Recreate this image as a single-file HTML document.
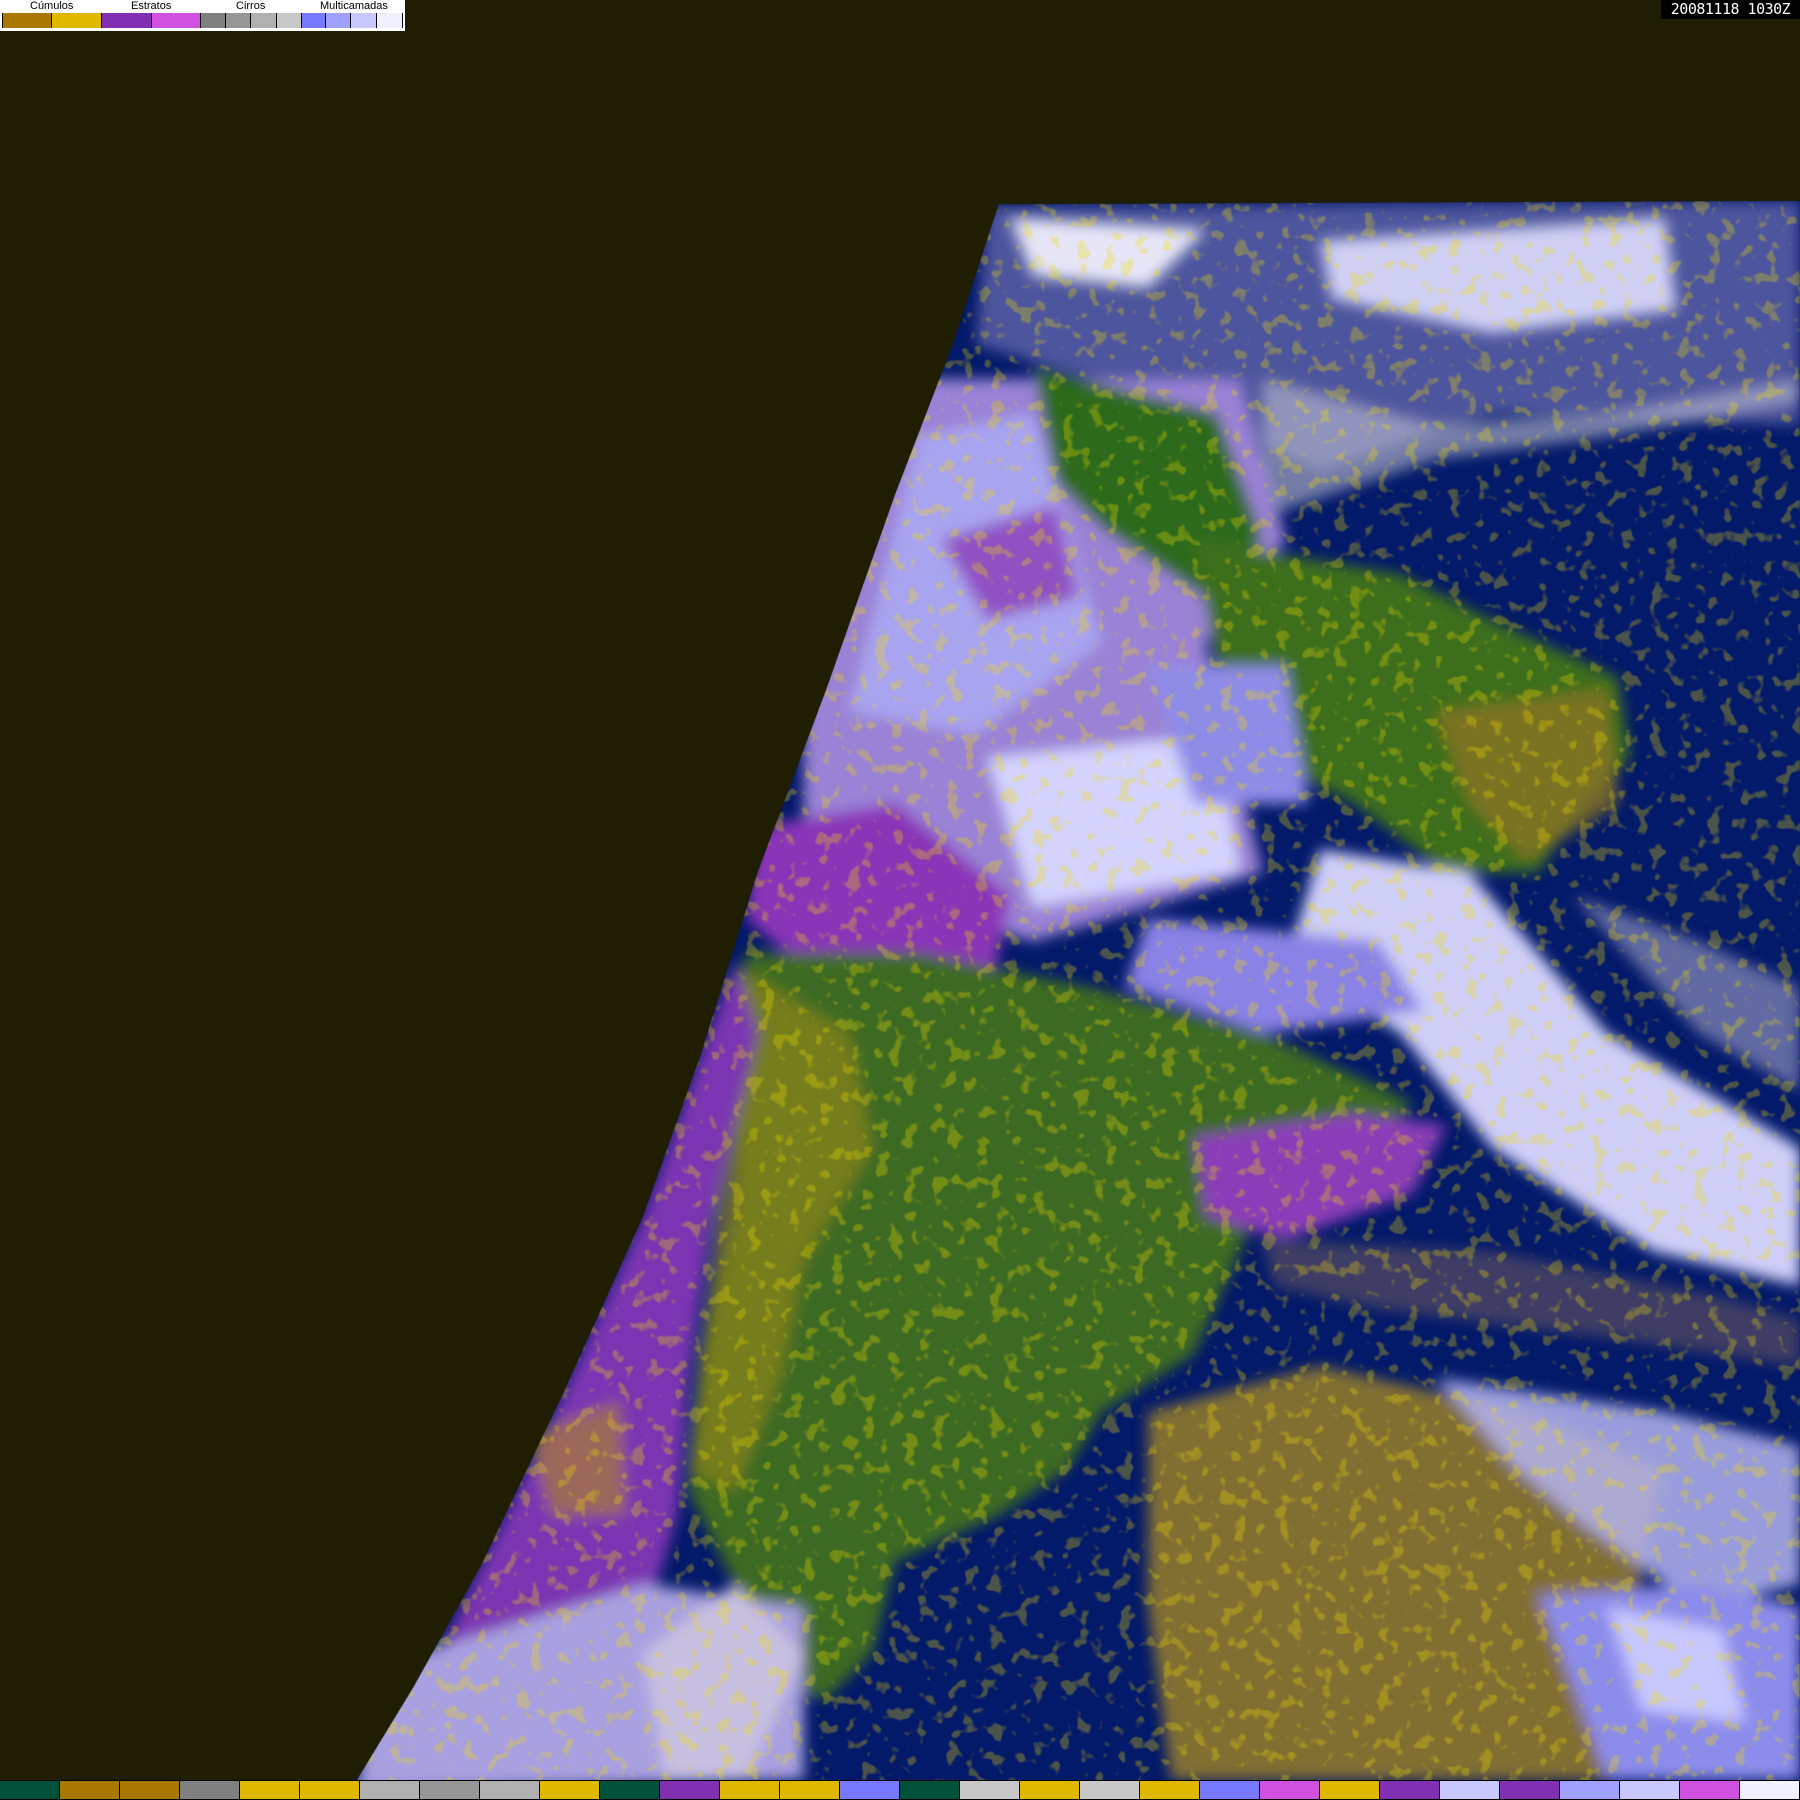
<!DOCTYPE html>
<html><head><meta charset="utf-8"><style>
html,body{margin:0;padding:0;background:#1f1d02;}
body{width:1800px;height:1800px;position:relative;overflow:hidden;font-family:"Liberation Sans",sans-serif;}
#map{position:absolute;left:0;top:0;}
#legend{position:absolute;left:0;top:0;width:405px;height:31px;background:#fff;}
#legend .lab{position:absolute;top:0;font-size:11px;color:#000;line-height:13px;}
#legend .sw{position:absolute;top:13px;height:15px;border-right:1px solid #000;}
#ts{position:absolute;right:0;top:0;width:139px;height:19px;background:#000;color:#fff;font-family:"DejaVu Sans Mono",monospace;font-size:15px;line-height:19px;text-align:center;letter-spacing:-0.5px;}
#bar{position:absolute;left:0;top:1780px;width:1800px;height:20px;background:#000;display:flex;}
#bar div{width:59px;height:18px;margin-top:1px;margin-right:1px;}
</style></head><body>
<svg id="map" width="1800" height="1800" viewBox="0 0 1568 1568">
<defs>
<clipPath id="earth"><polygon points="870,178 1568,175 1568,1552 310,1552 360,1470 420,1362 490,1215 560,1060 610,920 660,760 720,600 780,430 830,300"/></clipPath>
<filter id="b"><feGaussianBlur stdDeviation="6"/></filter>
<filter id="n" x="0" y="0" width="100%" height="100%"><feTurbulence type="fractalNoise" baseFrequency="0.08" numOctaves="2" seed="3"/><feColorMatrix type="matrix" values="0 0 0 0 0.88 0 0 0 0 0.72 0 0 0 0 0 0 0 0 9 -5.2"/></filter>
</defs>
<g clip-path="url(#earth)">
<rect x="300" y="170" width="1270" height="1390" fill="#03196a"/>
<g filter="url(#b)">
<polygon points="860,180 1568,175 1568,370 1300,360 1150,410 1080,380 950,330 850,300" fill="#8a86c8" opacity="0.55"/>
<polygon points="880,190 1050,200 1000,250 900,240" fill="#e6e6f8"/>
<polygon points="1150,210 1450,190 1460,270 1300,290 1160,260" fill="#d0d0f4"/>
<polygon points="1100,330 1250,370 1400,360 1568,330 1568,350 1400,380 1250,400 1100,450" fill="#c0c0d0" opacity="0.6"/>
<polygon points="780,330 1080,330 1120,470 1050,560 1100,760 900,820 700,760 700,600 760,450" fill="#9a82d6"/>
<polygon points="800,380 900,360 960,560 850,640 740,620" fill="#a9a4f0"/>
<polygon points="860,660 1060,640 1080,760 900,790" fill="#d4d4ff"/>
<polygon points="820,470 920,440 940,520 860,540" fill="#8a3cb8" opacity="0.8"/>
<polygon points="900,320 1060,360 1100,470 1050,520 960,460 920,420" fill="#2e6a1a"/>
<polygon points="1040,470 1220,500 1300,540 1410,590 1420,660 1380,700 1340,760 1260,760 1180,700 1100,660 1060,580" fill="#3c6e1e"/>
<polygon points="1250,620 1400,600 1410,700 1330,750 1280,700" fill="#8a7420" opacity="0.8"/>
<polygon points="1000,580 1120,580 1140,700 1040,700" fill="#8f8ce8"/>
<polygon points="660,720 780,700 880,780 860,880 720,860 650,800" fill="#8a34b8"/>
<polygon points="1150,740 1280,760 1400,900 1568,1000 1568,1120 1440,1090 1300,1000 1220,900 1120,840" fill="#cfcff8"/>
<polygon points="1000,800 1200,820 1240,880 1100,900 980,860" fill="#8a82e6"/>
<polygon points="1370,780 1480,820 1568,860 1568,950 1480,900" fill="#a0a0c8" opacity="0.6"/>
<polygon points="650,830 800,830 950,860 1100,900 1230,960 1200,1000 1110,1020 1080,1090 1040,1180 960,1230 930,1280 870,1320 780,1360 760,1440 720,1480 680,1470 640,1380 600,1300 610,1180 640,1050 640,950" fill="#3e6a20"/>
<polygon points="1040,990 1180,970 1260,980 1230,1040 1120,1080 1050,1060" fill="#8a3cb8"/>
<polygon points="640,840 740,900 760,1000 700,1100 680,1200 640,1300 600,1280 620,1100 630,950" fill="#9a8a20" opacity="0.6"/>
<polygon points="640,840 660,900 620,1060 600,1200 590,1320 560,1420 430,1500 330,1550 420,1362 490,1215 560,1060 610,920" fill="#7c35b2"/>
<polygon points="460,1250 540,1220 545,1320 480,1320" fill="#b08a20" opacity="0.6"/>
<polygon points="330,1450 560,1380 700,1400 700,1550 310,1560" fill="#a8a0e0"/>
<polygon points="560,1440 640,1380 700,1440 650,1550 580,1550" fill="#c8c0e0"/>
<polygon points="1000,1230 1150,1190 1330,1230 1450,1280 1420,1420 1400,1550 1020,1550 1000,1400" fill="#b89418" opacity="0.7"/>
<polygon points="1250,1200 1450,1230 1568,1260 1568,1380 1480,1400 1380,1330 1320,1280" fill="#b4b4f0" opacity="0.85"/>
<polygon points="1340,1390 1480,1380 1568,1400 1568,1550 1400,1550" fill="#8c8cec"/>
<polygon points="1400,1400 1500,1420 1520,1500 1430,1490" fill="#c8c8ff"/>
<polygon points="1100,1080 1300,1090 1500,1130 1568,1150 1568,1190 1400,1165 1200,1140 1110,1120" fill="#8a6a60" opacity="0.45"/>
</g>
<rect x="300" y="170" width="1270" height="1390" filter="url(#n)" opacity="0.3"/>
</g>
</svg>
<div id="legend">
<div class="lab" style="left:30px">Cúmulos</div>
<div class="lab" style="left:131px">Estratos</div>
<div class="lab" style="left:236px">Cirros</div>
<div class="lab" style="left:320px">Multicamadas</div>
<div style="position:absolute;left:2px;top:13px;width:1px;height:15px;background:#000"></div>
<div class="sw" style="left:3px;width:48px;background:#a87800"></div>
<div class="sw" style="left:52px;width:49px;background:#e0b800"></div>
<div class="sw" style="left:102px;width:49px;background:#8030b0"></div>
<div class="sw" style="left:152px;width:48px;background:#d050e0"></div>
<div class="sw" style="left:201px;width:24px;background:#808080"></div>
<div class="sw" style="left:226px;width:24px;background:#969696"></div>
<div class="sw" style="left:251px;width:25px;background:#b0b0b0"></div>
<div class="sw" style="left:277px;width:24px;background:#c8c8c8"></div>
<div class="sw" style="left:302px;width:23px;background:#7878ff"></div>
<div class="sw" style="left:326px;width:24px;background:#a0a0ff"></div>
<div class="sw" style="left:351px;width:25px;background:#c8c8ff"></div>
<div class="sw" style="left:377px;width:25px;background:#f0f0ff"></div>
</div>
<div id="ts">20081118 1030Z</div>
<div id="bar">
<div style="background:#00503a"></div><div style="background:#a87800"></div><div style="background:#a87800"></div><div style="background:#808080"></div><div style="background:#e0b800"></div><div style="background:#e0b800"></div><div style="background:#b0b0b0"></div><div style="background:#969696"></div><div style="background:#b0b0b0"></div><div style="background:#e0b800"></div><div style="background:#00503a"></div><div style="background:#8030b0"></div><div style="background:#e0b800"></div><div style="background:#e0b800"></div><div style="background:#7878ff"></div><div style="background:#00503a"></div><div style="background:#c8c8c8"></div><div style="background:#e0b800"></div><div style="background:#c8c8c8"></div><div style="background:#e0b800"></div><div style="background:#7878ff"></div><div style="background:#d050e0"></div><div style="background:#e0b800"></div><div style="background:#8030b0"></div><div style="background:#c8c8ff"></div><div style="background:#8030b0"></div><div style="background:#a0a0ff"></div><div style="background:#c8c8ff"></div><div style="background:#d050e0"></div><div style="background:#f0f0ff"></div>
</div>
</body></html>
